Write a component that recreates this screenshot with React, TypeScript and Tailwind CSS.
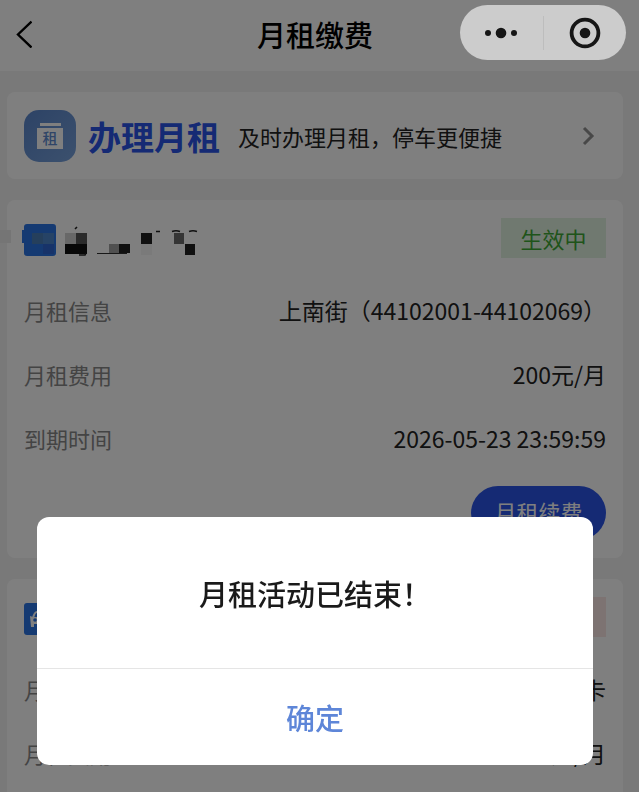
import { useState } from 'react';

type Row = { label: string; value: string };

const activeRows: Row[] = [
  { label: '月租信息', value: '上南街（44102001-44102069）' },
  { label: '月租费用', value: '200元/月' },
  { label: '到期时间', value: '2026-05-23 23:59:59' },
];

const endedRows: Row[] = [
  { label: '月租信息', value: '卡' },
  { label: '月租费用', value: '200元/月' },
];

// Plate number hidden behind mosaic blocks
const mosaic = [
  { x: 0, y: 6, w: 11, h: 13, fill: '#eaeaea' },
  { x: 32, y: 9, w: 11, h: 11, fill: '#4a7fb8' },
  { x: 43, y: 9, w: 11, h: 11, fill: '#4d86cc' },
  { x: 43, y: 20, w: 11, h: 10, fill: '#2f66d2' },
  { x: 65, y: 9, w: 11, h: 11, fill: '#d0d0d0' },
  { x: 76, y: 9, w: 11, h: 11, fill: '#565656' },
  { x: 65, y: 20, w: 22, h: 10, fill: '#101010' },
  { x: 97, y: 29, w: 30, h: 1, fill: '#303030' },
  { x: 109, y: 20, w: 10, h: 9, fill: '#a0a0a0' },
  { x: 119, y: 20, w: 11, h: 9, fill: '#202020' },
  { x: 141, y: 9, w: 11, h: 11, fill: '#202020' },
  { x: 141, y: 20, w: 11, h: 11, fill: '#f5f5f5' },
  { x: 174, y: 9, w: 10, h: 11, fill: '#6a6a6a' },
  { x: 185, y: 20, w: 10, h: 11, fill: '#202020' },
];

const InfoRows: React.FC<{ rows: Row[] }> = ({ rows }) => (
  <dl>
    {rows.map((row) => (
      <div key={row.label} className="flex h-16 items-center justify-between pb-1">
        <dt className="text-[#888888]">{row.label}</dt>
        <dd className="text-[23px] text-[#222222]">{row.value}</dd>
      </div>
    ))}
  </dl>
);

const CarIcon: React.FC = () => (
  <svg className="h-8 w-8" viewBox="0 0 32 32">
    <rect width="32" height="32" rx="3" fill="#2b74e4" />
    <path d="M9 15c1-4 2-6 4-6h7c2 0 3 2 4 6" fill="none" stroke="#fff" strokeWidth="2" />
    <path d="M6 13l3 1h15l3-1v11h-4v-3H10v3H7z" fill="#fff" />
    <circle cx="11" cy="17" r="1.8" fill="#2b74e4" />
    <circle cx="22" cy="17" r="1.8" fill="#2b74e4" />
  </svg>
);

export default function App() {
  const [open, setOpen] = useState(true);

  return (
    <div className="h-screen overflow-hidden bg-[#f2f2f2] pr-[9px] font-['Noto_Sans_CJK_SC','Noto_Sans',sans-serif] text-[22px] leading-8">
      {/* Nav bar */}
      <header className="-mr-[9px] flex h-[71px] items-center bg-white pr-[9px] pb-1">
        <button type="button" aria-label="返回" className="ml-4 w-8">
          <svg className="h-7 w-4" viewBox="0 0 16 28" fill="none" stroke="#000" strokeWidth="2.4">
            <path d="M15.5 1.5L2 14.5l13.5 13" />
          </svg>
        </button>
        <h1 className="mr-12 flex-1 text-center text-[29px] font-medium text-black">月租缴费</h1>
      </header>

      <main className="flex flex-col gap-[21px] px-[7px] pt-[21px]">
        <a href="#apply" className="flex h-[87px] items-center rounded-lg bg-white px-[17px]">
          <svg className="h-[52px] w-[52px] shrink-0" viewBox="0 0 52 52">
            <defs>
              <linearGradient id="applyBg" x1="0" y1="0" x2="1" y2="1">
                <stop offset="0" stopColor="#5a86cc" />
                <stop offset="1" stopColor="#78a2dc" />
              </linearGradient>
            </defs>
            <rect width="52" height="52" rx="15" fill="url(#applyBg)" />
            <path d="M16 13h21v3H16zM13 18h26v21H13z" fill="#fff" />
            <text x="26" y="34" textAnchor="middle" fontSize="15" fontWeight="500" fill="#5f8bd0">租</text>
          </svg>
          <span className="ml-3 text-[33px] font-bold text-[#2a54e8]">办理月租</span>
          <span className="ml-[18px] flex-1 text-[#222222]">及时办理月租，停车更便捷</span>
          <svg className="mr-2.5 h-5 w-4" viewBox="0 0 16 20" fill="none" stroke="#909090" strokeWidth="3">
            <path d="M4 2l8 8-8 8" />
          </svg>
        </a>

        <section className="rounded-lg bg-white px-[17px] pb-[18px]">
          <div className="flex h-20 items-center justify-between">
            <svg className="-ml-6 h-8 w-[210px]" viewBox="0 0 210 32">
              <path d="M27 0h26q3 0 3 3v26q0 3-3 3H27q-3 0-3-3V19h-2V6h2V3q0-3 3-3z" fill="#2b74e4" />
              {mosaic.map((b) => (
                <rect key={`${b.x}-${b.y}`} x={b.x} y={b.y} width={b.w} height={b.h} fill={b.fill} />
              ))}
              <path
                d="M75 5l2-2M79 31h6l1-2M156 7.500h4M172 7.500q4-1.500 8 0M189 7.500q4-1.500 8 0"
                fill="none"
                stroke="#202020"
                strokeWidth="1.600"
              />
            </svg>
            <span className="mb-1 flex h-10 w-[105px] items-center justify-center bg-[#e1f2e1] text-[#3fa835]">生效中</span>
          </div>
          <InfoRows rows={activeRows} />
          <div className="mt-[14px] flex justify-end">
            <button type="button" className="h-[54px] w-[135px] rounded-full bg-[#2a54e8] pb-1 text-white">
              月租续费
            </button>
          </div>
        </section>

        <section className="rounded-lg bg-white px-[17px] pb-[18px]">
          <div className="flex h-20 items-center justify-between">
            <CarIcon />
            <span className="mb-1 h-10 w-[105px] bg-[#fbe6e4]" />
          </div>
          <InfoRows rows={endedRows} />
        </section>
      </main>

      {open && (
        <div className="fixed inset-0 flex items-end bg-black/50 pr-[46px] pb-[27px] pl-[37px]">
          <div role="dialog" aria-modal="true" className="w-full overflow-hidden rounded-xl bg-white text-[29px] font-medium">
            <p className="flex h-[151px] items-center justify-center text-[#1a1a1a]">月租活动已结束！</p>
            <button
              type="button"
              className="h-[97px] w-full border-t border-[#e5e5e5] text-[#5e86d8]"
              onClick={() => setOpen(false)}
            >
              确定
            </button>
          </div>
        </div>
      )}

      {/* Mini program capsule */}
      <div className="fixed top-[5px] right-[13px] flex h-[55px] w-[166px] items-center rounded-full bg-white/60">
        <button type="button" aria-label="更多" className="flex flex-1 justify-center">
          <svg className="h-3 w-9" viewBox="0 0 36 12" fill="#161616">
            <circle cx="5" cy="6" r="3" />
            <circle cx="18" cy="6" r="5.3" />
            <circle cx="31" cy="6" r="3" />
          </svg>
        </button>
        <span className="h-[34px] w-px bg-[#bdbdbd]" />
        <button type="button" aria-label="关闭" className="flex flex-1 justify-center">
          <svg className="h-8 w-8" viewBox="0 0 32 32">
            <circle cx="16" cy="16" r="13.4" fill="none" stroke="#161616" strokeWidth="3.8" />
            <circle cx="16" cy="16" r="5.3" fill="#161616" />
          </svg>
        </button>
      </div>
    </div>
  );
}
